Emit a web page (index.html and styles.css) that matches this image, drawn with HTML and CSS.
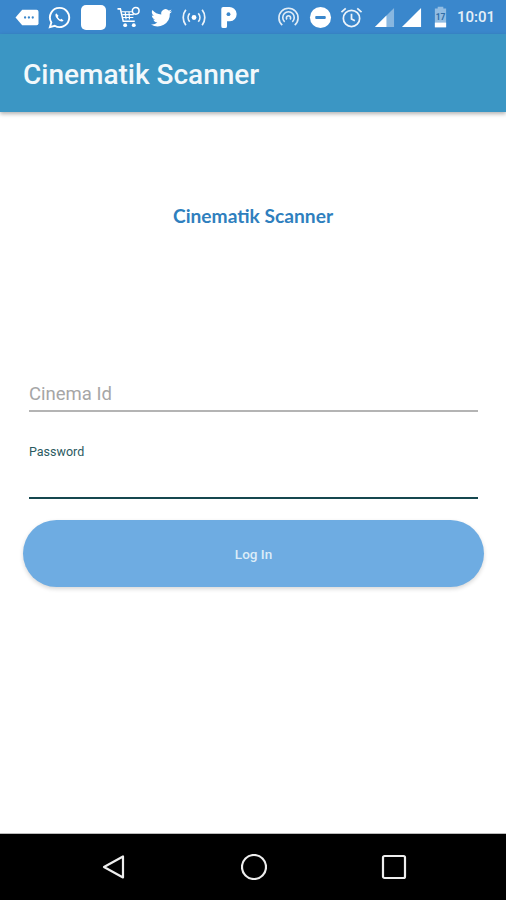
FILE: index.html
```html
<!DOCTYPE html>
<html lang="en">
<head>
  <meta charset="UTF-8" />
  <title>Cinematik Scanner</title>
  <link rel="stylesheet" href="styles.css">
</head>
<body>

  <div class="status-bar">
    <div class="status-icons">
      <svg class="ic" style="width:26px" viewBox="0 0 26 24"><path d="M8 4h15a2 2 0 0 1 2 2v12a2 2 0 0 1-2 2H8l-7-8z" fill="#fff"/><g fill="#3a87cc"><circle cx="11" cy="12" r="1.2"/><circle cx="15" cy="12" r="1.2"/><circle cx="19" cy="12" r="1.2"/></g></svg>
      <svg class="ic" viewBox="0 0 24 24"><path d="M12 2a10 10 0 0 0-8.500 15.200L2 22l5-1.400A10 10 0 1 0 12 2z" fill="none" stroke="#fff" stroke-width="2"/><path d="M8.500 7.500c-1.500 1.500-.8 4 1.500 6.300s4.800 3 6.300 1.500l-2.200-2-1.200.8c-1-.4-2.200-1.600-2.700-2.700l.8-1.200z" fill="#fff"/></svg>
      <div class="white-square"></div>
      <svg class="ic" style="width:26px" viewBox="0 0 26 24"><path d="M1 3h3l3 13h12" fill="none" stroke="#fff" stroke-width="1.600"/><path d="M5 6h11M6 9h12M6.500 12h11M9 6l1 8M13 6l.5 8" fill="none" stroke="#fff" stroke-width="1.200"/><circle cx="9" cy="20" r="2" fill="#fff"/><circle cx="18" cy="20" r="2" fill="#fff"/><circle cx="20" cy="5" r="3.500" fill="none" stroke="#fff" stroke-width="1.600"/></svg>
      <svg class="ic" viewBox="0 0 24 24"><path fill="#fff" d="M23 5.500c-.8.400-1.700.6-2.600.7.900-.6 1.600-1.400 2-2.500-.9.500-1.800.9-2.900 1.100a4.500 4.500 0 0 0-7.700 4.100C8 8.700 4.700 6.900 2.500 4.200c-1.200 2-.6 4.600 1.400 6-.7 0-1.400-.2-2-.6 0 2.200 1.500 4.100 3.600 4.500-.7.200-1.400.2-2 .1.600 1.800 2.200 3.100 4.200 3.100A9 9 0 0 1 1 19.200 12.800 12.800 0 0 0 20.700 7.800c.9-.6 1.700-1.400 2.300-2.300z"/></svg>
      <svg class="ic" style="width:26px" viewBox="0 0 26 24"><circle cx="13" cy="12" r="2.500" fill="#fff"/><path d="M8.500 7.500a7 7 0 0 0 0 9M17.500 7.500a7 7 0 0 1 0 9M4.500 4a13 13 0 0 0 0 16M21.500 4a13 13 0 0 1 0 16" fill="none" stroke="#fff" stroke-width="1.800" opacity=".9"/></svg>
      <svg class="ic p-icon" viewBox="0 0 18 24"><path fill="#fff" d="M2 3a2 2 0 0 1 2-2h6a7.500 7.500 0 0 1 1 15H8v5a2 2 0 0 1-2 2H4a2 2 0 0 1-2-2z"/><circle cx="9.500" cy="8.500" r="2" fill="#3a87cc"/></svg>
    </div>
    <div class="status-icons right">
      <svg class="ic" viewBox="0 0 24 24"><g fill="none" stroke="#fff" stroke-width="1.700" opacity=".85"><path d="M5.500 20a10 10 0 1 1 13 0"/><path d="M8 16.500a6 6 0 1 1 8 0"/><path d="M10.500 14a2.200 2.200 0 1 1 3 0"/></g></svg>
      <svg class="ic" viewBox="0 0 24 24"><circle cx="12" cy="12" r="11" fill="#fff"/><rect x="6.500" y="10.500" width="11" height="3" rx="1" fill="#3a87cc"/></svg>
      <svg class="ic alarm" viewBox="0 0 24 24"><circle cx="12" cy="13" r="8.500" fill="none" stroke="#fff" stroke-width="1.800" opacity=".9"/><path d="M12 8v5.500l3.500 2M1.500 6.500l4.500-4M22.500 6.500l-4.500-4" fill="none" stroke="#fff" stroke-width="1.800" opacity=".9"/></svg>
      <svg class="ic signal" viewBox="0 0 22 22"><path d="M1 21 21 1v20z" fill="#fff" opacity=".4"/><path d="M1 21 13 9v12z" fill="#fff"/></svg>
      <svg class="ic signal second" viewBox="0 0 22 22"><path d="M1 21 21 1v20z" fill="#fff"/></svg>
      <svg class="ic battery" viewBox="0 0 16 24"><path d="M5 1h6v2h3v20H2V3h3z" fill="#fff" opacity=".45"/><path d="M2 18h12v5H2z" fill="#fff"/><text x="8" y="15" text-anchor="middle" class="battery-num">17</text></svg>
      <span class="clock">10:01</span>
    </div>
  </div>

  <header class="app-bar">Cinematik Scanner</header>

  <main class="content">
    <div class="logo">Cinematik Scanner</div>

    <div class="field">
      <span class="placeholder">Cinema Id</span>
    </div>

    <div class="field focused">
      <span class="float-label">Password</span>
    </div>

    <button class="login-btn">Log In</button>
  </main>

  <nav class="nav-bar">
    <svg class="nav-icon" viewBox="0 0 26 26"><path d="M22 2.500v21L3 13z" fill="none" stroke="#eee" stroke-width="2.200" stroke-linejoin="round"/></svg>
    <svg class="nav-icon" viewBox="0 0 26 26"><circle cx="13" cy="13" r="12" fill="none" stroke="#eee" stroke-width="2.200"/></svg>
    <svg class="nav-icon" viewBox="0 0 26 26"><rect x="2" y="2" width="22" height="22" rx="1.500" fill="none" stroke="#eee" stroke-width="2.200"/></svg>
  </nav>

</body>
</html>
```

FILE: styles.css
```css
body {
  margin: 0;
  width: 506px;
  height: 900px;
  display: flex;
  flex-direction: column;
  overflow: hidden;
  background: #fff;
  font-family: Roboto, "Liberation Sans", sans-serif;
}

/* Top system bar */
.status-bar {
  height: 34px;
  flex-shrink: 0;
  display: flex;
  justify-content: space-between;
  align-items: center;
  padding: 0 11px 0 14px;
  background: #3a87cc;
}
.status-icons {
  display: flex;
  align-items: center;
  gap: 8px;
}
.status-icons.right {
  gap: 9px;
}
.ic {
  width: 23px;
  height: 23px;
  flex-shrink: 0;
}
.p-icon {
  width: 18px;
  margin-left: 4px;
}
.alarm {
  margin: 0 2px 0 -1px;
}
.signal {
  width: 21px;
  height: 21px;
}
.signal.second {
  margin: 0 2px 0 -3px;
}
.battery {
  width: 15px;
  height: 24px;
}
.battery-num {
  font-size: 9px;
  font-weight: 700;
  fill: #2f6ea8;
}
.white-square {
  width: 25px;
  height: 25px;
  margin: 0 2px;
  border-radius: 5px;
  background: #fff;
}
.clock {
  color: #e6f0f8;
  font-size: 15px;
  font-weight: 500;
}

.app-bar {
  height: 78px;
  flex-shrink: 0;
  box-sizing: border-box;
  padding: 24px 0 0 23px;
  background: #3b96c4;
  color: #f2f8fb;
  font-size: 28px;
  font-weight: 500;
  line-height: 34px;
  box-shadow: 0 2px 4px rgba(0,0,0,0.3);
}

/* Login form */
.content {
  flex: 1;
  display: flex;
  flex-direction: column;
}
.logo {
  margin-top: 92px;
  text-align: center;
  color: #2f7fbe;
  font-family: Lato, sans-serif;
  font-size: 19.200px;
  font-weight: 700;
  line-height: 24px;
}
.field {
  margin: 0 28px 0 29px;
  border-bottom: 2px solid #b4b4b4;
}
.placeholder {
  display: block;
  margin-top: 153px;
  padding-bottom: 3px;
  color: #a6a6a6;
  font-size: 18.500px;
  line-height: 26px;
}
.field.focused {
  border-bottom-color: #15474f;
  height: 55px;
  margin-top: 32px;
  box-sizing: border-box;
}
.float-label {
  display: block;
  color: #2b5a61;
  font-size: 12.500px;
  line-height: 16px;
}
.login-btn {
  height: 67px;
  margin: 21px 22px 0 23px;
  border: none;
  border-radius: 34px;
  background: #6eace2;
  color: #dcecf8;
  font-family: Roboto, sans-serif;
  font-size: 13.500px;
  font-weight: 500;
  box-shadow: 0 2px 4px rgba(0,0,0,0.16);
}

/* Bottom system bar */
.nav-bar {
  height: 67px;
  flex-shrink: 0;
  display: grid;
  grid-template-columns: repeat(3, 140px);
  justify-items: center;
  align-items: center;
  padding-left: 44px;
  background: #000;
  border-top: 1px solid #bbb;
  box-sizing: border-box;
}
.nav-icon {
  width: 26px;
  height: 26px;
}
```
